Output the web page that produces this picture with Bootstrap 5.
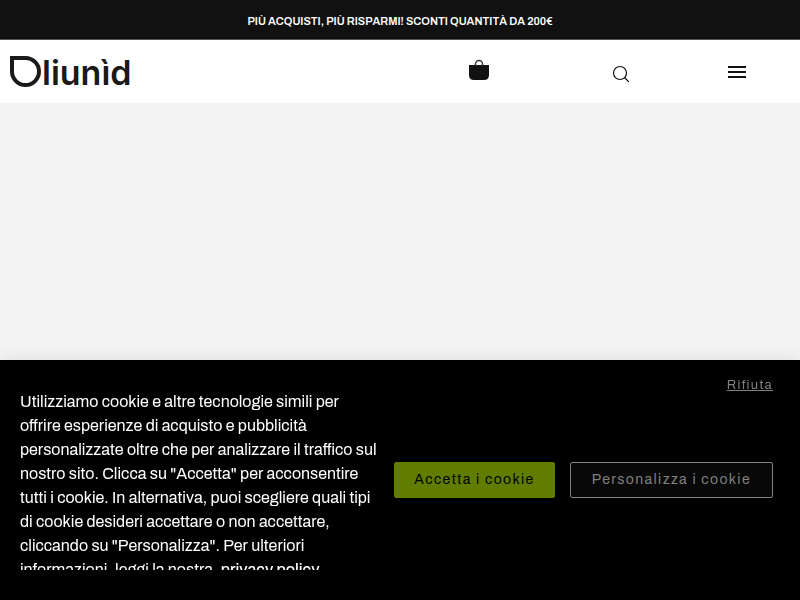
<!DOCTYPE html>
<html lang="it">
<head>
<meta charset="utf-8">
<meta name="viewport" content="width=device-width, initial-scale=1">
<title>Oliunìd</title>
<link rel="stylesheet" href="https://cdn.jsdelivr.net/npm/bootstrap@5.3.0/dist/css/bootstrap.min.css">
<style>
body { background: #f4f4f4; color: #111; font-family: Archivo, "Liberation Sans", Arial, sans-serif; font-kerning: none; }
.promo { background: #111; border-bottom: 1px solid #555; height: 40px; padding-top: 3px; font-size: 11px; line-height: 16px; font-weight: 600; }
.site-header { height: 63px; }
.col-tool { width: 15%; }
.col-bag { width: 20%; }
.logo-link { margin-left: 10px; }
.icon-btn { line-height: 0; }
.menu-btn { margin-right: 6px; }
.consent { background: #000; padding: 30px 27px 30px 20px; gap: 15px; box-shadow: 0 0 18px rgba(0,0,0,.1); }
.consent-text { max-height: 180px; font-size: 16px; line-height: 24px; flex: 1 1 0; }
.policy-link { font-weight: 500; }
.consent-actions { gap: 15px; }
.consent .btn { height: 36px; border-radius: 2px; padding: 0 19px; font-size: 14px; line-height: 32px; letter-spacing: .1em; }
.consent .btn-accept, .btn-accept:hover { background: #607d00; border-color: #607d00; color: #000; }
.consent .btn-custom, .btn-custom:hover { background: #080808; border-color: #808080; color: #808080; padding: 0 21px; }
.reject { top: 16px; right: 27px; font-size: 13px; line-height: 18px; letter-spacing: .1em; color: #808080; }
</style>
<script src="https://cdn.jsdelivr.net/npm/bootstrap@5.3.0/dist/js/bootstrap.bundle.min.js" defer></script>
</head>
<body>
<div class="promo text-white text-center d-flex align-items-center justify-content-center">PIÙ ACQUISTI, PIÙ RISPARMI! SCONTI QUANTITÀ DA 200€</div>
<header class="site-header bg-white d-flex align-items-center">
  <div class="w-50">
    <a class="logo-link d-inline-block icon-btn" href="#" aria-label="Oliunìd">
      <svg width="124" height="32" viewBox="0 0 124 32" overflow="visible">
        <path d="M2 2H15.500A13.500 13.500 0 1 1 2 15.500Z" fill="none" stroke="#1a1a1a" stroke-width="4"/>
        <text x="32" y="29" font-family="Inter, sans-serif" font-weight="600" font-size="34" fill="#1a1a1a">liunìd</text>
      </svg>
    </a>
  </div>
  <div class="col-bag text-center">
    <button type="button" class="border-0 bg-transparent p-0 icon-btn" aria-label="Carrello">
      <svg width="22" height="28" viewBox="0 0 22 28"><path d="M0 7H20V17Q20 22 15 22H5Q0 22 0 17Z" fill="#111"/><path d="M6.500 8V6a3.500 3.500 0 0 1 7 0V8" fill="none" stroke="#333" stroke-width="1.500"/></svg>
    </button>
  </div>
  <div class="col-tool text-center">
    <button type="button" class="border-0 bg-transparent p-0 icon-btn" aria-label="Cerca">
      <svg width="18" height="20" viewBox="0 0 18 20"><circle cx="9" cy="11" r="6.500" fill="none" stroke="#111" stroke-width="1.200"/><path d="M13.500 15.500L18 20" stroke="#111" stroke-width="1.200"/></svg>
    </button>
  </div>
  <div class="col-tool text-center">
    <button type="button" class="border-0 bg-transparent p-0 icon-btn menu-btn" aria-label="Menu">
      <svg width="18" height="12" viewBox="0 0 18 12"><path d="M0 1H18M0 6H18M0 11H18" stroke="#111" stroke-width="2"/></svg>
    </button>
  </div>
</header>
<main></main>
<section class="consent fixed-bottom d-flex align-items-center" aria-label="Cookie">
  <a class="reject position-absolute" href="#">Rifiuta</a>
  <div class="consent-text overflow-hidden text-white">Utilizziamo cookie e altre tecnologie simili per offrire esperienze di acquisto e pubblicità personalizzate oltre che per analizzare il traffico sul nostro sito. Clicca su "Accetta" per acconsentire tutti i cookie. In alternativa, puoi scegliere quali tipi di cookie desideri accettare o non accettare, cliccando su "Personalizza". Per ulteriori informazioni, leggi la nostra, <a class="policy-link text-white text-decoration-none" href="#">privacy policy</a>.</div>
  <div class="consent-actions d-flex flex-shrink-0">
    <button type="button" class="btn btn-accept">Accetta i cookie</button>
    <button type="button" class="btn btn-custom">Personalizza i cookie</button>
  </div>
</section>
</body>
</html>
